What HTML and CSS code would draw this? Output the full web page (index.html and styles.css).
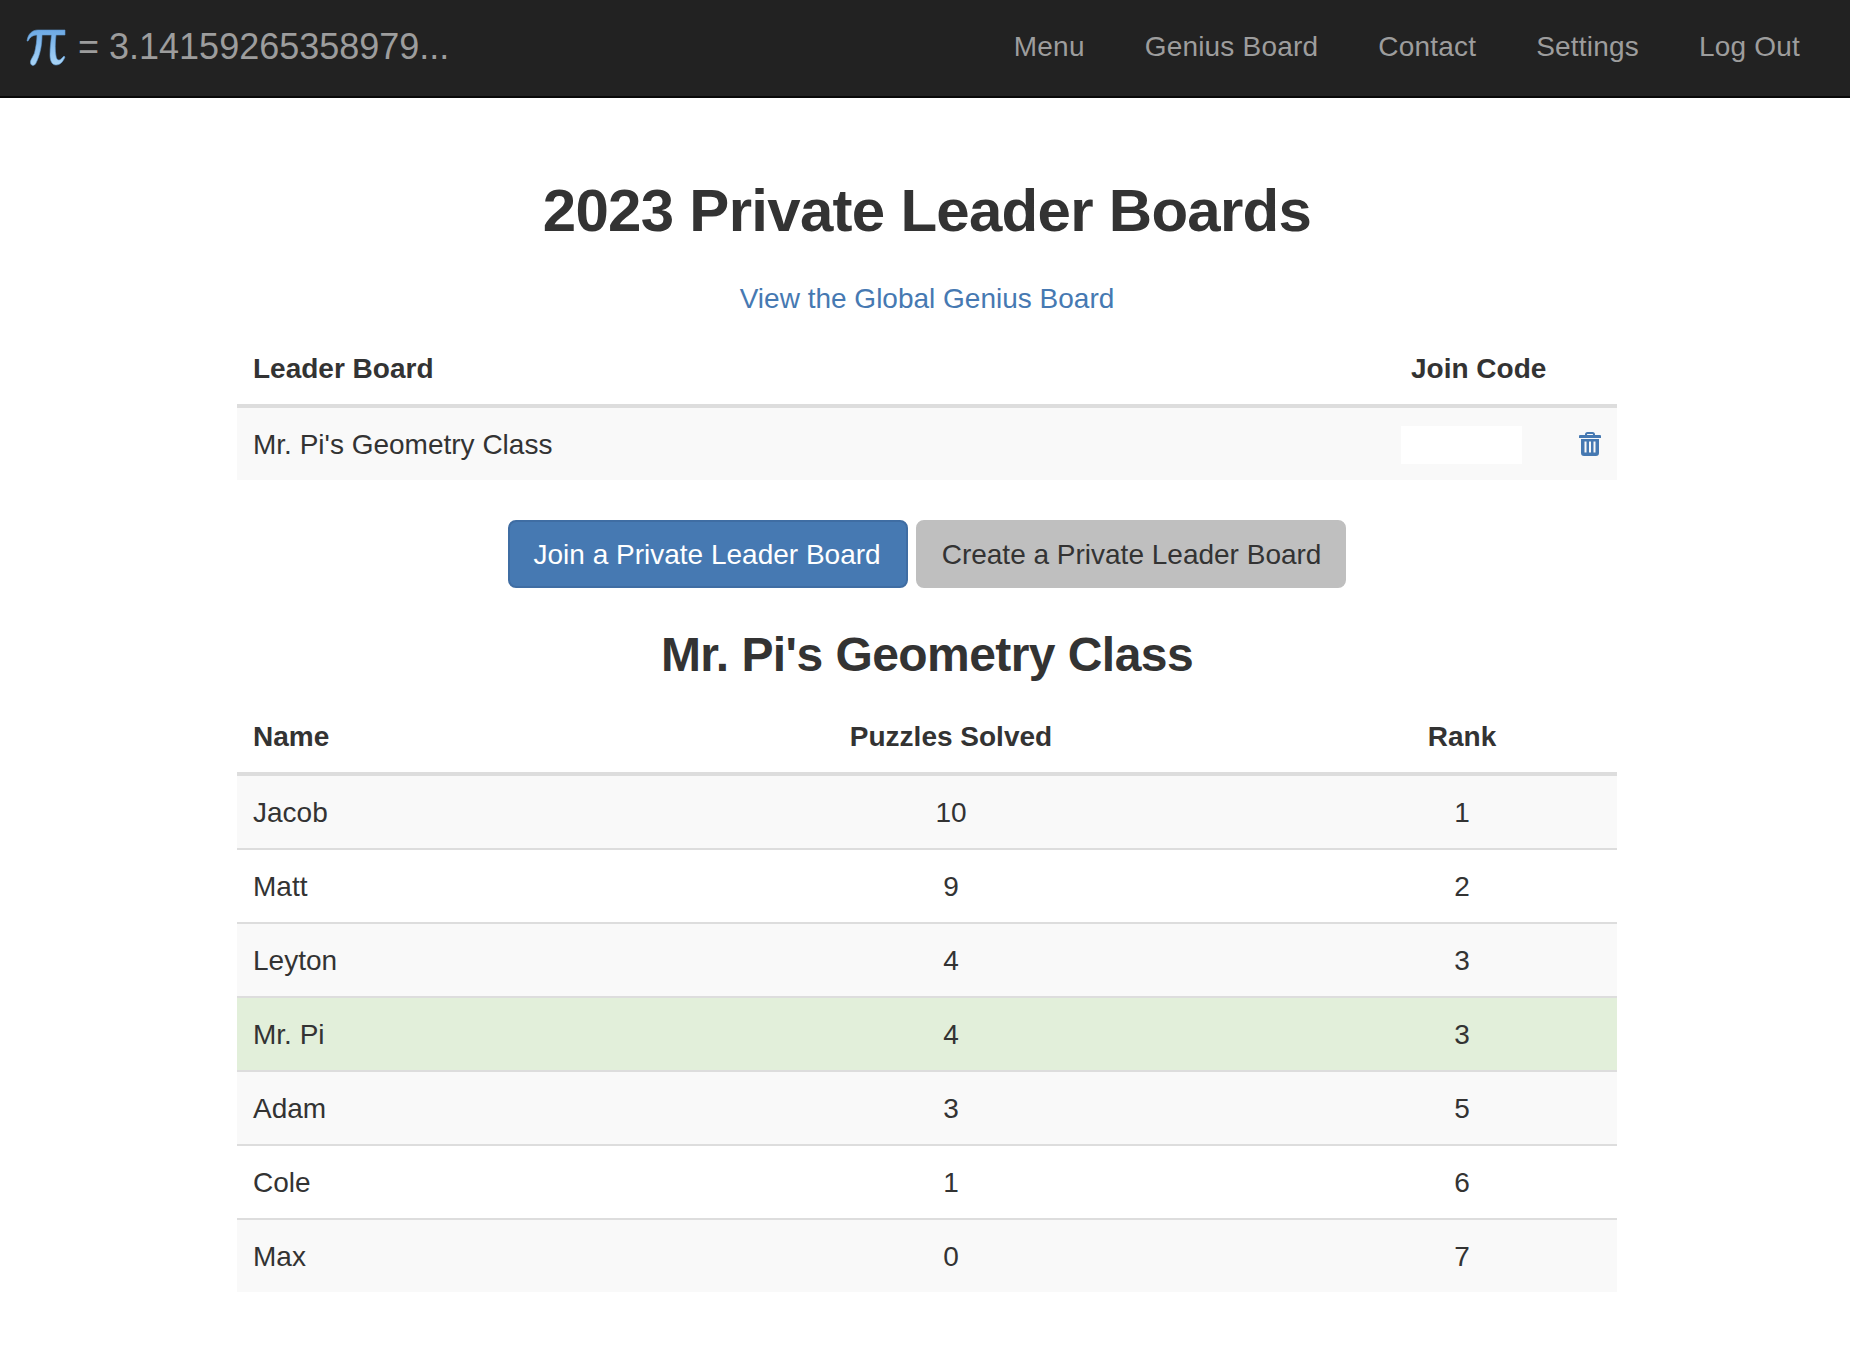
FILE: index.html
```html
<!DOCTYPE html>
<html lang="en">
<head>
  <meta charset="UTF-8" />
  <meta name="viewport" content="width=device-width, initial-scale=1.0"/>
  <title>Private Leader Boards</title>
  <link rel="stylesheet" href="styles.css">
</head>
<body>

  <nav class="navbar">
    <a class="brand" href="#">
      <svg class="pi" viewBox="0 0 40 38" width="40" height="38" role="img" aria-label="Pi">
        <defs>
          <linearGradient id="piFill" x1="0" y1="0" x2="0" y2="1">
            <stop offset="0" stop-color="#6da9e4"/>
            <stop offset="0.5" stop-color="#8cc0ef"/>
            <stop offset="1" stop-color="#a9d4f6"/>
          </linearGradient>
        </defs>
        <path fill="url(#piFill)" stroke="#5e98d2" stroke-width="0.6" d="M1 12C2 5 6 1 12 1L39 1L39 6L30 6C29 14 29 22 30 27C30.5 31 33 32 35 30L38 27L39 28C37 33 34 36 30 36C26 36 24 32 24 26C24 18 25 12 25.5 6L16 6C16 16 14 26 10 34C9 37 5 37.5 4.5 34C4 31 7 28 8.5 24C10 18 11 11 11 6C7 6 4 8 2 12Z"/>
      </svg>
      <span>= 3.14159265358979...</span>
    </a>
    <ul class="nav-links">
      <li><a href="#">Menu</a></li>
      <li><a href="#">Genius Board</a></li>
      <li><a href="#">Contact</a></li>
      <li><a href="#">Settings</a></li>
      <li><a href="#">Log Out</a></li>
    </ul>
  </nav>

  <main class="container">
    <h1>2023 Private Leader Boards</h1>
    <p class="global-link"><a href="#">View the Global Genius Board</a></p>

    <table class="board-table">
      <colgroup>
        <col>
        <col class="col-code">
        <col class="col-trash">
      </colgroup>
      <thead>
        <tr>
          <th>Leader Board</th>
          <th>Join Code</th>
          <th></th>
        </tr>
      </thead>
      <tbody>
        <tr>
          <td>Mr. Pi's Geometry Class</td>
          <td class="code-cell"><input class="code-input" type="text" aria-label="Join code" /></td>
          <td class="trash-cell">
            <a href="#" aria-label="Delete">
              <svg class="trash" viewBox="0 0 22 24" width="22" height="24">
                <path d="M6 3V2.500A2.500 2.500 0 0 1 8.500 0h5A2.500 2.500 0 0 1 16 2.500V3h5a1 1 0 0 1 1 1v2H0V4a1 1 0 0 1 1-1zM8 3h6V2.500a.5.5 0 0 0-.5-.5h-5a.5.5 0 0 0-.5.5z"/>
                <path fill-rule="evenodd" d="M2 7h18v14a3 3 0 0 1-3 3H5a3 3 0 0 1-3-3zM5.500 9.500v11h2v-11zM10 9.500v11h2v-11zM14.500 9.500v11h2v-11z"/>
              </svg>
            </a>
          </td>
        </tr>
      </tbody>
    </table>

    <div class="actions">
      <a class="btn btn-primary" href="#">Join a Private Leader Board</a>
      <a class="btn btn-default" href="#">Create a Private Leader Board</a>
    </div>

    <h2>Mr. Pi's Geometry Class</h2>

    <table class="rank-table">
      <colgroup>
        <col class="col-name">
        <col class="col-solved">
        <col class="col-rank">
      </colgroup>
      <thead>
        <tr>
          <th>Name</th>
          <th class="center">Puzzles Solved</th>
          <th class="center">Rank</th>
        </tr>
      </thead>
      <tbody>
        <tr><td>Jacob</td><td class="center">10</td><td class="center">1</td></tr>
        <tr><td>Matt</td><td class="center">9</td><td class="center">2</td></tr>
        <tr><td>Leyton</td><td class="center">4</td><td class="center">3</td></tr>
        <tr class="me"><td>Mr. Pi</td><td class="center">4</td><td class="center">3</td></tr>
        <tr><td>Adam</td><td class="center">3</td><td class="center">5</td></tr>
        <tr><td>Cole</td><td class="center">1</td><td class="center">6</td></tr>
        <tr><td>Max</td><td class="center">0</td><td class="center">7</td></tr>
      </tbody>
    </table>
  </main>

</body>
</html>
```

FILE: styles.css
```css
* {
  box-sizing: border-box;
}
body {
  margin: 0;
  font-family: "Liberation Sans", Arial, sans-serif;
  font-size: 28px;
  line-height: 40px;
  color: #333;
  background-color: #fff;
}
a {
  color: #4679b2;
  text-decoration: none;
}

.navbar {
  display: flex;
  justify-content: space-between;
  align-items: center;
  height: 98px;
  padding: 0 20px 3px 26px;
  background-color: #222;
  border-bottom: 2px solid #080808;
}
.brand {
  display: flex;
  align-items: center;
  gap: 12px;
  font-size: 36px;
  color: #9d9d9d;
}
.pi {
  display: block;
  margin-top: 2px;
}
.nav-links {
  display: flex;
  margin: 0;
  padding: 0;
  list-style: none;
}
.nav-links a {
  display: block;
  padding: 0 30px;
  color: #9d9d9d;
  letter-spacing: 0.2px;
}

.container {
  width: 1380px;
  margin: 0 233px 0 237px;
}
h1 {
  margin: 73px 0 0;
  font-size: 60px;
  line-height: 80px;
  letter-spacing: -0.72px;
  text-align: center;
}
.global-link {
  margin: 28px 0 0;
  text-align: center;
}
h2 {
  margin: 35px 0 0;
  font-size: 48px;
  line-height: 64px;
  letter-spacing: -0.56px;
  text-align: center;
}

table {
  width: 100%;
  table-layout: fixed;
  border-collapse: collapse;
}
th {
  padding: 16px 16px 15px;
  text-align: left;
  border-bottom: 4px solid #ddd;
}
td {
  padding: 17px 16px 15px;
  border-top: 2px solid #ddd;
}
thead + tbody tr:first-child td {
  border-top: 0;
}
tbody tr:nth-child(odd) {
  background-color: #f9f9f9;
}
tbody tr.me {
  background-color: #e2efda;
}
.center {
  text-align: center;
}

.board-table {
  margin-top: 14px;
}
.col-code {
  width: 168px;
}
.col-trash {
  width: 54px;
}
.code-cell {
  padding: 2px 6px 0;
}
.code-input {
  display: block;
  width: 121px;
  height: 38px;
  border: 0;
  background: #fff;
}
.trash-cell {
  padding: 0;
  text-align: center;
}
.trash {
  display: block;
  margin: 0 auto;
  fill: #4679b2;
}

.actions {
  display: flex;
  justify-content: center;
  gap: 8px;
  margin-top: 40px;
}
.btn {
  display: block;
  padding: 13px 24px 11px;
  border: 2px solid transparent;
  border-radius: 8px;
}
.btn-primary {
  padding-right: 25px;
  color: #fff;
  background-color: #4679b2;
  border-color: #3f6da3;
}
.btn-default {
  padding-right: 23px;
  color: #333;
  background-color: #bfbfbf;
  border-color: #bfbfbf;
}

.rank-table {
  margin-top: 14px;
}
.col-name {
  width: 358px;
}
.col-solved {
  width: 712px;
}
.col-rank {
  width: 310px;
}
```
